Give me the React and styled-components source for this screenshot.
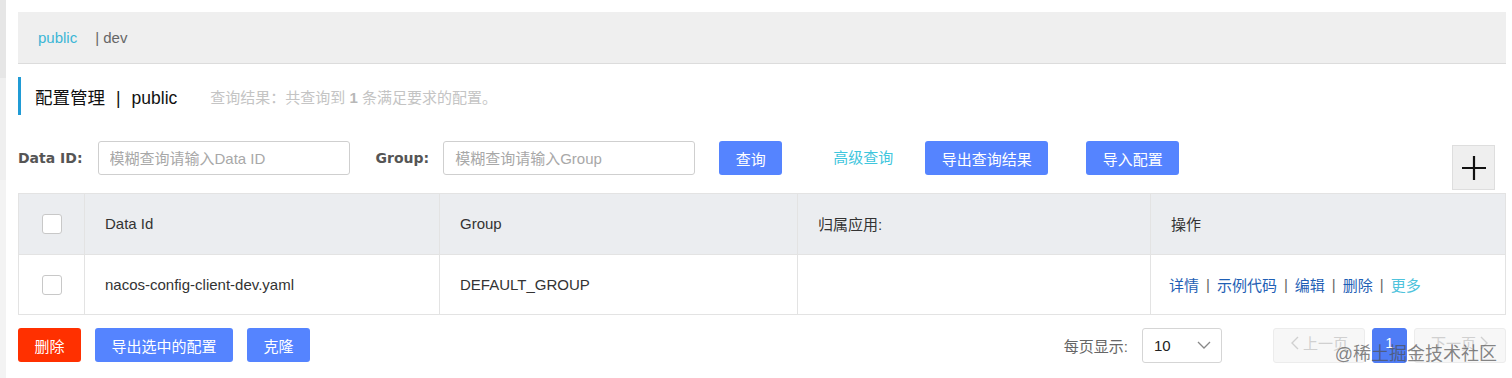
import React from "react";
import styled, { createGlobalStyle } from "styled-components";

const Global = createGlobalStyle`
  html, body { margin: 0; padding: 0; background: #fff; }
  body { font-family: "Liberation Sans", "Noto Sans CJK SC", sans-serif; font-size: 15px; color: #333; }
  * { box-sizing: border-box; }
`;

const Page = styled.div`
  display: flex;
  width: 1512px;
  height: 378px;
  overflow: hidden;
`;

const SideEdge = styled.div`
  width: 6px;
  flex: none;
  background: linear-gradient(#e6e6e6 0 78px, #efefef 78px 180px, #f3f3f3 180px);
`;

const Main = styled.div`
  flex: 1;
  padding: 12px 6px 0 12px;
  display: flex;
  flex-direction: column;
  position: relative;
`;

const NsBar = styled.div`
  height: 52px;
  background: #efefef;
  border-bottom: 1px solid #dcdcdc;
  display: flex;
  align-items: center;
  padding-left: 20px;
  font-size: 15px;
`;

const NsItem = styled.span`
  color: ${(p) => (p.$active ? "#3bb6d6" : "#666")};
  margin-right: ${(p) => (p.$active ? "18px" : "0")};
`;

const TitleRow = styled.div`
  margin-top: 13px;
  height: 38px;
  display: flex;
  align-items: center;
  border-left: 3px solid #209bd5;
  padding-left: 14px;
`;

const Title = styled.span`
  font-size: 17.5px;
  color: #111;
`;

const Sep = styled.span`
  margin: 0 11px;
`;

const Summary = styled.span`
  margin-left: 33px;
  font-size: 15px;
  color: #c4c4c4;
  b { font-weight: 700; color: #b8b8b8; }
`;

const SearchRow = styled.div`
  margin-top: 26px;
  display: flex;
  align-items: flex-start;
`;

const Label = styled.label`
  font-family: "DejaVu Sans", sans-serif;
  font-weight: 700;
  color: #555;
  font-size: 14px;
  line-height: 34px;
  margin-left: ${(p) => p.$ml || "0"};
`;

const Input = styled.input`
  width: 252px;
  height: 34px;
  border: 1px solid #cfcfcf;
  border-radius: 3px;
  padding: 0 11px;
  font-family: inherit;
  font-size: 15px;
  color: #333;
  margin-left: ${(p) => p.$ml || "0"};
  &::placeholder { color: #a8a8a8; }
  outline: none;
`;

const Button = styled.button`
  height: 34px;
  padding: 0 16.5px;
  border: none;
  border-radius: 3px;
  background: ${(p) => (p.$danger ? "#ff3000" : "#5584ff")};
  color: #fff;
  font-family: inherit;
  font-size: 15px;
  margin-left: ${(p) => p.$ml || "0"};
  cursor: pointer;
`;

const TextLink = styled.span`
  color: #3fc6dd;
  font-size: 15px;
  line-height: 34px;
  margin-left: ${(p) => p.$ml || "0"};
`;

const PlusButton = styled.button`
  margin-left: auto;
  margin-right: 11px;
  margin-top: 4px;
  width: 43px;
  height: 45px;
  background: #efefef;
  border: 1px solid #dedede;
  display: flex;
  align-items: center;
  justify-content: center;
  padding: 0;
`;

const Table = styled.div`
  margin-top: 3px;
  border: 1px solid #e3e3e3;
  display: grid;
  grid-template-columns: 65px 355px 358px 353px 1fr;
`;

const Cell = styled.div`
  height: ${(p) => (p.$head ? "61px" : "59px")};
  background: ${(p) => (p.$head ? "#ebedf0" : "#fff")};
  border-left: ${(p) => (p.$first ? "none" : "1px solid #e3e3e3")};
  border-bottom: ${(p) => (p.$head ? "1px solid #e3e3e3" : "none")};
  display: flex;
  align-items: center;
  justify-content: ${(p) => (p.$center ? "center" : "flex-start")};
  padding-left: ${(p) => (p.$center ? "0" : "20px")};
  padding-bottom: ${(p) => (p.$head ? "1px" : "0")};
  font-size: 15px;
  color: #333;
`;

const Check = styled.span`
  width: 20px;
  height: 20px;
  border: 1px solid #c8c8c8;
  border-radius: 3px;
  background: #fff;
  display: inline-block;
`;

const Actions = styled.div`
  display: flex;
  align-items: center;
  gap: 7px;
  margin-left: -2px;
`;

const Action = styled.span`
  color: ${(p) => (p.$more ? "#4fc3dc" : "#1f5fb5")};
`;

const Bar = styled.span`
  color: #666;
`;

const Footer = styled.div`
  margin-top: 13px;
  display: flex;
  align-items: flex-start;
`;

const PagerArea = styled.div`
  margin-left: auto;
  display: flex;
  align-items: center;
`;

const PageLabel = styled.span`
  color: #666;
  font-size: 15px;
  margin-right: 14px;
`;

const Select = styled.div`
  width: 80px;
  height: 35px;
  border: 1px solid #d5d5d5;
  border-radius: 3px;
  display: flex;
  align-items: center;
  justify-content: space-between;
  padding: 0 10px 0 11px;
  color: #222;
  font-size: 15px;
`;

const PageBtn = styled.div`
  height: 35px;
  min-width: ${(p) => (p.$current ? "35px" : "92px")};
  margin-left: ${(p) => p.$ml || "0"};
  border-radius: 3px;
  display: flex;
  align-items: center;
  justify-content: center;
  gap: 4px;
  font-size: 15px;
  padding-bottom: 6px;
  background: ${(p) => (p.$current ? "#4f7cf5" : "#f7f7f7")};
  border: 1px solid ${(p) => (p.$current ? "#4f7cf5" : "#ececec")};
  color: ${(p) => (p.$current ? "#fff" : "#d0d0d0")};
`;

const Watermark = styled.div`
  position: absolute;
  right: 15px;
  bottom: 13px;
  font-size: 18px;
  color: rgba(80, 80, 80, 0.7);
  pointer-events: none;
`;

const Chevron = ({ dir }) => (
  <svg width="9" height="14" viewBox="0 0 9 14" fill="none" stroke="currentColor" strokeWidth="1.4">
    {dir === "left" ? <path d="M8 1 L2 7 L8 13" /> : <path d="M1 1 L7 7 L1 13" />}
  </svg>
);

export default function App() {
  return (
    <>
      <Global />
      <Page>
        <SideEdge />
        <Main>
          <NsBar>
            <NsItem $active>public</NsItem>
            <NsItem>| dev</NsItem>
          </NsBar>
          <TitleRow>
            <Title>
              配置管理<Sep>|</Sep>public
            </Title>
            <Summary>
              查询结果：共查询到 <b>1</b> 条满足要求的配置。
            </Summary>
          </TitleRow>
          <SearchRow>
            <Label>Data ID:</Label>
            <Input $ml="15px" placeholder="模糊查询请输入Data ID" />
            <Label $ml="26px">Group:</Label>
            <Input $ml="14px" placeholder="模糊查询请输入Group" />
            <Button $ml="24px">查询</Button>
            <TextLink $ml="51px">高级查询</TextLink>
            <Button $ml="32px">导出查询结果</Button>
            <Button $ml="38px">导入配置</Button>
            <PlusButton aria-label="add">
              <svg width="26" height="26" viewBox="0 0 26 26" stroke="#111" strokeWidth="2.2">
                <path d="M13 1 V25 M1 13 H25" />
              </svg>
            </PlusButton>
          </SearchRow>
          <Table>
            <Cell $head $first $center><Check /></Cell>
            <Cell $head>Data Id</Cell>
            <Cell $head>Group</Cell>
            <Cell $head>归属应用:</Cell>
            <Cell $head>操作</Cell>
            <Cell $first $center><Check /></Cell>
            <Cell>nacos-config-client-dev.yaml</Cell>
            <Cell>DEFAULT_GROUP</Cell>
            <Cell />
            <Cell>
              <Actions>
                <Action>详情</Action><Bar>|</Bar>
                <Action>示例代码</Action><Bar>|</Bar>
                <Action>编辑</Action><Bar>|</Bar>
                <Action>删除</Action><Bar>|</Bar>
                <Action $more>更多</Action>
              </Actions>
            </Cell>
          </Table>
          <Footer>
            <Button $danger>删除</Button>
            <Button $ml="14px">导出选中的配置</Button>
            <Button $ml="14px">克隆</Button>
            <PagerArea>
              <PageLabel>每页显示:</PageLabel>
              <Select>
                <span>10</span>
                <svg width="14" height="9" viewBox="0 0 14 9" fill="none" stroke="#888" strokeWidth="1.3">
                  <path d="M1 1 L7 7 L13 1" />
                </svg>
              </Select>
              <PageBtn $ml="51px"><Chevron dir="left" />上一页</PageBtn>
              <PageBtn $current $ml="7px">1</PageBtn>
              <PageBtn $ml="7px">下一页<Chevron dir="right" /></PageBtn>
            </PagerArea>
          </Footer>
          <Watermark>@稀土掘金技术社区</Watermark>
        </Main>
      </Page>
    </>
  );
}
